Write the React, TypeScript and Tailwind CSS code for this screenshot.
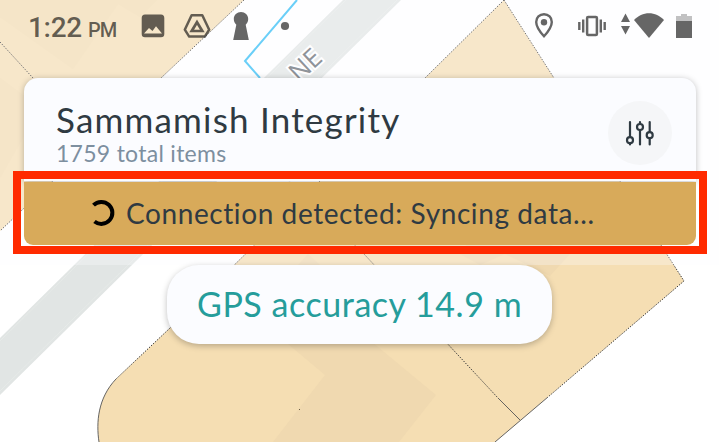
function MapBackground() {
  return (
    <svg className="absolute inset-0" width="719" height="442" viewBox="0 0 719 442" fill="none">
      <rect width="719" height="442" fill="#fff" />

      {/* road */}
      <path d="M343 0H401L0 395V338Z" fill="#e1e5e4" />
      <path d="M346 0L0 341M397 0L0 391" stroke="#e8ecea" strokeWidth="0.7" />

      {/* parcels */}
      <path d="M0 0H244L161 78L0 231Z" fill="#f5deb3" />
      <path d="M0 0H157L140 17L118 4L73 69L0 17Z" fill="#f2dbb0" />
      <path d="M0 78L40 108L0 178Z" fill="#f2dbb0" />
      <path d="M504 0L684 281L495 442H99C96 422 98 398 116 379L170 328L425 78Z" fill="#f5deb3" />
      <path d="M288 344L325 375L273 442H399L436 395L372 342Z" fill="#f0d9b0" />
      <path d="M308 254L320 265H298Z" fill="#f0d9b0" />
      <path d="M460 254L480 265L505 254L550 276L570 254L540 240H470Z" fill="#f0d9b0" />

      {/* parcel borders */}
      <g stroke="#3a3a3a" strokeWidth="1" strokeDasharray="1.4 1.4">
        <path d="M244 0L161 78L0 231" />
        <path d="M0 42L33 78" />
        <path d="M504 0L684 281L548 397M504 0L425 78L170 328L116 379" />
        <path d="M252 145L364 254L498 398" />
      </g>
      <path d="M116 379C98 398 96 422 99 442M498 398L520 420M548 397L495 442" stroke="#555" strokeWidth="0.9" />
      <rect x="299" y="409" width="1" height="1" fill="#6b5d45" />

      <path d="M297 0L245 61L260 78" stroke="#2cbcf5" strokeWidth="2" />

      <text
        transform="translate(299 83) rotate(-43)"
        fill="#60666d"
        stroke="#fff"
        strokeWidth="4"
        paintOrder="stroke"
        className="font-['Open_Sans',sans-serif] text-[26px]"
      >
        NE
      </text>

      <rect width="719" height="265" fill="#fbfcff" fillOpacity="0.3" />
    </svg>
  )
}

function StatusBar() {
  return (
    <div className="flex h-[54px] shrink-0 items-start justify-between pl-[28px] pr-[26px] text-black/60">
      <div className="flex items-start">
        <div className="mt-[9px] flex w-[113px] items-baseline whitespace-nowrap font-['Roboto',sans-serif] font-medium leading-[38px]">
          <span className="text-[28px] tracking-[-0.3px]">1:22</span>
          <span className="ml-[6px] text-[20px] tracking-[-0.9px]">PM</span>
        </div>
        {/* picture, drive, keyhole, dot */}
        <svg width="160" height="54" viewBox="141 0 160 54">
          <path
            fill="currentColor"
            fillRule="evenodd"
            d="M145 14.500H161Q164.300 14.500 164.300 18V34Q164.300 37.200 161 37.200H145Q141.700 37.200 141.700 34V18Q141.700 14.500 145 14.500ZM144 33.500H162L156 26.300L152.500 31L149 28Z"
          />
          <path
            d="M191.600 15.300H202.300L209.200 29.700L204.800 36.600H189.200L184.800 29.700Z"
            fill="none"
            stroke="currentColor"
            strokeWidth="2.500"
            strokeLinejoin="round"
          />
          <path d="M197 22.200L202.300 31H191.700Z" fill="none" stroke="currentColor" strokeWidth="2.700" />
          <path
            fill="currentColor"
            d="M241 12C245 12 248.200 15.200 248.200 19C248.200 21.500 247.200 23.400 245.700 24.700L248.800 40H233.200L236.300 24.700C234.800 23.400 233.800 21.500 233.800 19C233.800 15.200 237 12 241 12Z"
          />
          <circle cx="285" cy="26" r="4.100" fill="currentColor" />
        </svg>
      </div>
      {/* location, vibrate, data, wifi, battery */}
      <svg width="160" height="54" viewBox="533 0 160 54">
        <path
          d="M544 14.200C539.500 14.200 536.200 17.500 536.200 21.900C536.200 27.500 544 36.300 544 36.300S551.800 27.500 551.800 21.900C551.800 17.500 548.500 14.200 544 14.200Z"
          fill="none"
          stroke="currentColor"
          strokeWidth="2.400"
        />
        <circle cx="544" cy="22.200" r="3.200" fill="currentColor" />
        <rect x="587.100" y="17.100" width="9.800" height="17.800" rx="1" fill="none" stroke="currentColor" strokeWidth="2.500" />
        <path d="M579.300 22V30M583.200 19.500V32.500M600.800 19.500V32.500M604.700 22V30" stroke="currentColor" strokeWidth="2.400" />
        <path d="M625.500 13.500L630 22H621ZM621 26H630L625.500 34.500Z" fill="currentColor" />
        <path d="M649 38L634 20C638 15.800 643.500 13.200 649 13.200S660 15.800 664 20Z" fill="currentColor" />
        <path d="M676 21V16H681V14H687V16H692V21Z" fill="currentColor" fillOpacity="0.4" />
        <rect x="676" y="21" width="16" height="17" fill="currentColor" />
      </svg>
    </div>
  )
}

function FilterButton() {
  return (
    <button className="flex h-[64px] w-[64px] items-center justify-center rounded-full bg-[#f5f6f8]">
      <svg width="30" height="26" viewBox="0 0 30 26" fill="none" stroke="#2f3a42" strokeWidth="2.200" strokeLinecap="round">
        <path d="M5 2V17M5 23.500V24.500M15 2V3M15 10V24.500M24.700 2V12M24.700 19V24.500" />
        <circle cx="5" cy="20.200" r="3" />
        <circle cx="15" cy="7" r="3" />
        <circle cx="24.700" cy="15.200" r="3" />
      </svg>
    </button>
  )
}

export default function App() {
  return (
    <div className="relative h-[442px] w-[719px] overflow-hidden font-['Lato',sans-serif] text-[#2f3a42]">
      <MapBackground />

      <div className="relative flex h-full flex-col">
        <StatusBar />

        <div className="ml-[24px] mr-[23px] mt-[24px] flex h-[103px] shrink-0 justify-between rounded-t-[14px] bg-[#fbfcff] pl-[32px] pr-[24px] shadow-[0_1px_6px_rgba(0,0,0,0.25)]">
          <div className="whitespace-nowrap pt-[19px]">
            <h1 className="text-[35px] leading-[44px] tracking-[1.2px]">Sammamish Integrity</h1>
            <p className="text-[23px] leading-[24px] tracking-[0.28px] text-[#7d8f9f]">1759 total items</p>
          </div>
          <div className="pt-[23px]">
            <FilterButton />
          </div>
        </div>

        {/* sync banner, outlined by the red callout */}
        <div className="-mt-[10px] ml-[13px] mr-[12px] h-[83px] shrink-0 border-[8px] border-[#ff2a00] px-[3px] pt-[3px]">
          <div className="flex h-[63px] items-center rounded-b-[9px] bg-[#d8aa5a] pb-[2px] pl-[65px]">
            <svg width="28" height="28" viewBox="0 0 28 28" fill="none">
              <path d="M4.500 6.200A11 11 0 1 1 5.500 22.500" stroke="#000" strokeWidth="4" />
            </svg>
            <span className="ml-[9px] whitespace-nowrap text-[28px] leading-[40px] tracking-[0.59px]">
              Connection detected: Syncing data...
            </span>
          </div>
        </div>

        <div className="ml-[167px] mt-[11px] flex h-[79px] w-[385px] shrink-0 items-center rounded-[32px] bg-[#fbfcff] pl-[30px] shadow-[0_2px_6px_rgba(0,0,0,0.25)]">
          <span className="-mt-[2px] whitespace-nowrap text-[34px] leading-[44px] tracking-[0.54px] text-[#259d9b]">GPS accuracy 14.9 m</span>
        </div>
      </div>
    </div>
  )
}
